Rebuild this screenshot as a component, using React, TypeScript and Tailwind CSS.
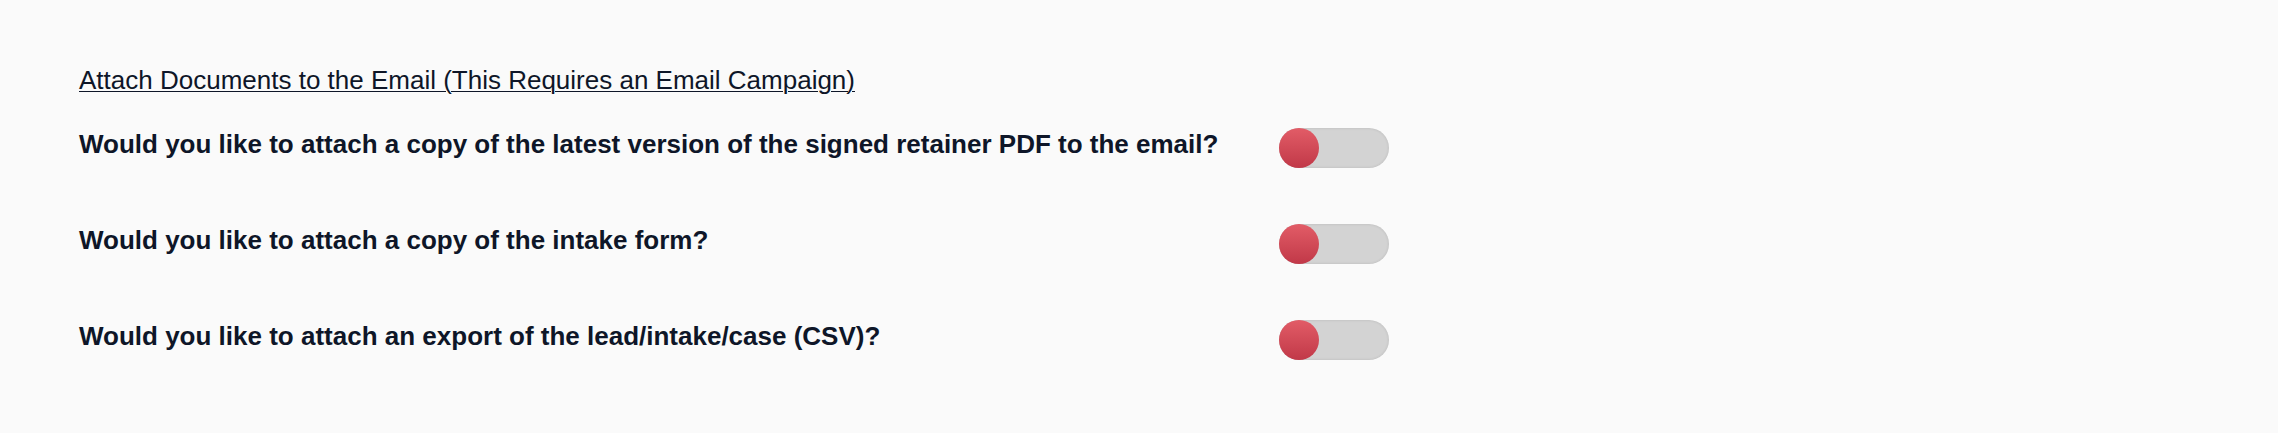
import React, { useState } from "react";

interface AttachOption {
  id: string;
  label: string;
}

const options: AttachOption[] = [
  {
    id: "retainer",
    label:
      "Would you like to attach a copy of the latest version of the signed retainer PDF to the email?",
  },
  { id: "intake", label: "Would you like to attach a copy of the intake form?" },
  {
    id: "export",
    label: "Would you like to attach an export of the lead/intake/case (CSV)?",
  },
];

const Toggle: React.FC<{ checked: boolean; onChange: () => void }> = ({
  checked,
  onChange,
}) => (
  <button
    type="button"
    role="switch"
    aria-checked={checked}
    onClick={onChange}
    className={`relative flex h-[40px] w-[110px] shrink-0 items-center rounded-full shadow-[inset_0_0_3px_rgba(0,0,0,0.12)] ${
      checked ? "justify-end bg-[#f0b8be]" : "justify-start bg-[#d3d3d3]"
    }`}
  >
    <span className="h-[40px] w-[40px] rounded-full bg-gradient-to-b from-[#e25c67] to-[#c13848]" />
  </button>
);

export default function App() {
  const [values, setValues] = useState<Record<string, boolean>>({
    retainer: false,
    intake: false,
    export: false,
  });

  return (
    <div className="min-h-[433px] w-full bg-[#fafafa] pl-[79px] pt-[65px] font-['Liberation_Sans',Arial,sans-serif] text-[#0e1628]">
      <h2 className="text-[26px] leading-[30px] underline decoration-1 underline-offset-[2px]">
        Attach Documents to the Email (This Requires an Email Campaign)
      </h2>
      <div className="mt-[33px] flex flex-col gap-[56px]">
        {options.map((opt) => (
          <div key={opt.id} className="flex items-start">
            <label className="mt-[1px] w-[1200px] shrink-0 text-[26px] font-bold leading-[30px]">
              {opt.label}
            </label>
            <Toggle
              checked={values[opt.id]}
              onChange={() =>
                setValues((prev) => ({ ...prev, [opt.id]: !prev[opt.id] }))
              }
            />
          </div>
        ))}
      </div>
    </div>
  );
}
